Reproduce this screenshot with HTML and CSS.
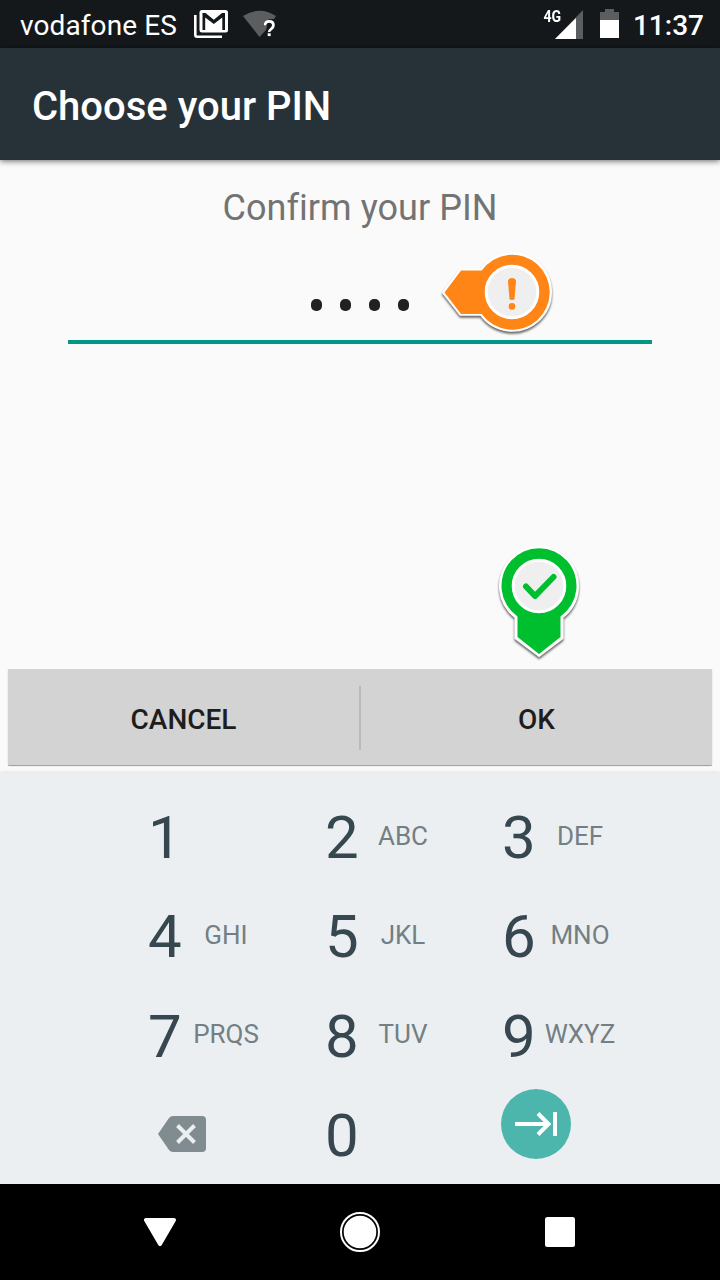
FILE: index.html
```
<!DOCTYPE html>
<html lang="en">
<head>
    <meta charset="UTF-8">
    <meta name="viewport" content="width=device-width, initial-scale=1.0">
    <title>Choose your PIN</title>
    <link rel="stylesheet" href="styles.css">
</head>
<body>
    <div class="status-bar">
        <span class="carrier">vodafone ES</span>
        <svg class="mail-icon" width="34" height="28" viewBox="0 0 34 28">
            <path d="M1.300 5v20q0 1.700 1.700 1.700h25" fill="none" stroke="#fff" stroke-width="2.600"/>
            <rect x="5.500" y="0" width="28.500" height="22.500" rx="2.500" fill="#fff"/>
            <path d="M8.500 20V3h3l8.300 6.800L28 3h3v17h-2.700V7.500L19.800 14 11.200 7.500V20z" fill="#14181b"/>
        </svg>
        <svg class="wifi-icon" width="34" height="28" viewBox="0 0 34 28">
            <path d="M0 6Q16.500-4.500 33 6L31 9Q22 8 20 16h4l-1 4-6.500 7z" fill="#5b5d5f"/>
            <path d="M22 15.500q0-4.200 4.200-4.200t4.200 4q0 2-2.200 3.700t-2 3" fill="none" stroke="#fff" stroke-width="2.800"/>
            <rect x="24.700" y="23.300" width="3" height="2.800" fill="#fff"/>
        </svg>
        <span class="network">4G</span>
        <svg class="signal-icon" width="29" height="29" viewBox="0 0 29 29">
            <path d="M28 0v29H0z" fill="#5b5d5f"/>
            <path d="M21 8v21H0z" fill="#fff"/>
        </svg>
        <svg class="battery-icon" width="19" height="29" viewBox="0 0 19 29">
            <path d="M0 3h5V0h9v3h5v9H0z" fill="#5b5d5f"/>
            <path d="M0 11h19v18H0z" fill="#fff"/>
        </svg>
        <span class="clock">11:37</span>
    </div>
    <div class="header">Choose your PIN</div>
    <div class="content">
        <div class="label">Confirm your PIN</div>
        <div class="pin">
            <span class="dot"></span>
            <span class="dot"></span>
            <span class="dot"></span>
            <span class="dot"></span>
        </div>
        <svg class="marker warning" width="120" height="90" viewBox="0 0 120 90">
            <path d="M6.500 44.500 23 22.500h20.500a37.500 37.500 0 1 1 0 43H23z" fill="#fff" stroke="#fff" stroke-width="4.500"/>
            <path d="M6.500 44.500 23 22.500h20.700a37.500 37.500 0 1 1 0 43.500H23z" fill="#ff8516"/>
            <circle cx="74" cy="44" r="25.800" fill="#efefef" stroke="#fff" stroke-width="3"/>
            <path d="M70 33.500q0-3.500 4-3.500t4 3.500L76.500 51q-.5 1-2.500 1t-2.500-1z" fill="#ff8516"/>
            <circle cx="74" cy="58.400" r="3.300" fill="#ff8516"/>
        </svg>
        <svg class="marker success" width="90" height="120" viewBox="0 0 90 120">
            <path d="M45 114 23 97.500V76.500a37.500 37.500 0 1 1 44 0v21z" fill="#fff" stroke="#fff" stroke-width="5"/>
            <path d="M45 114 23.500 97V76.500a37.500 37.500 0 1 1 43 0V97z" fill="#00bf2f"/>
            <circle cx="45" cy="46" r="25.800" fill="#efefef" stroke="#fff" stroke-width="3"/>
            <path d="M32 46.500 41 56l18.500-19" fill="none" stroke="#00bf2f" stroke-width="6" stroke-linecap="round" stroke-linejoin="round"/>
        </svg>
        <div class="actions">
            <button>CANCEL</button>
            <div class="divider"></div>
            <button>OK</button>
        </div>
    </div>
    <div class="keypad">
        <div class="key"><b>1</b><span></span></div>
        <div class="key"><b>2</b><span>ABC</span></div>
        <div class="key"><b>3</b><span>DEF</span></div>
        <div class="key"><b>4</b><span>GHI</span></div>
        <div class="key"><b>5</b><span>JKL</span></div>
        <div class="key"><b>6</b><span>MNO</span></div>
        <div class="key"><b>7</b><span>PRQS</span></div>
        <div class="key"><b>8</b><span>TUV</span></div>
        <div class="key"><b>9</b><span>WXYZ</span></div>
        <div class="key delete">
            <svg width="48" height="36" viewBox="0 0 48 36">
                <path d="M0 18 11 2q1.500-2 4-2h29q4 0 4 4v28q0 4-4 4H15q-2.500 0-4-2z" fill="#808c90"/>
                <path d="M19.500 9.500l17 17M36.500 9.500l-17 17" stroke="#eceff1" stroke-width="4"/>
            </svg>
        </div>
        <div class="key"><b>0</b><span></span></div>
        <div class="key next">
            <svg width="70" height="70" viewBox="0 0 70 70">
                <circle cx="35" cy="35" r="35" fill="#4db6ac"/>
                <path d="M14 35h33M37 24.500 47.500 35 37 45.500M54 23v24" fill="none" stroke="#fff" stroke-width="4"/>
            </svg>
        </div>
    </div>
    <div class="nav-bar">
        <svg width="32" height="28" viewBox="0 0 32 28">
            <path d="M2 2h28L16 26z" fill="#fff" stroke="#fff" stroke-width="4" stroke-linejoin="round"/>
        </svg>
        <svg width="40" height="40" viewBox="0 0 40 40">
            <circle cx="20" cy="20" r="19" fill="none" stroke="#fff" stroke-width="2"/>
            <circle cx="20" cy="20" r="16.300" fill="#fff"/>
        </svg>
        <svg width="30" height="30" viewBox="0 0 30 30">
            <rect width="30" height="30" rx="2.500" fill="#fff"/>
        </svg>
    </div>
</body>
</html>
```
FILE: styles.css
```
* {
    margin: 0;
    padding: 0;
    box-sizing: border-box;
}
body {
    display: flex;
    flex-direction: column;
    width: 720px;
    height: 1280px;
    background: #fafafa;
    font-family: Roboto, sans-serif;
    overflow: hidden;
}
svg {
    display: block;
    flex: none;
}
.status-bar {
    display: flex;
    align-items: center;
    height: 48px;
    padding: 0 16px 0 20px;
    background: #14181b;
    color: #fff;
    font-size: 28px;
}
.carrier {
    width: 174px;
    padding-top: 3px;
    letter-spacing: 0.1px;
}
.wifi-icon {
    margin-left: 15px;
}
.network {
    margin-left: auto;
    margin-right: -6px;
    padding-bottom: 16px;
    font-size: 16px;
    font-weight: 700;
    transform: scaleX(0.88);
    transform-origin: right;
}
.battery-icon {
    margin-left: 16px;
    margin-bottom: 1px;
}
.clock {
    margin-left: 14px;
    padding-top: 3px;
    font-weight: 500;
}
.header {
    height: 112px;
    padding-left: 32px;
    background: #263238;
    color: #fff;
    font-size: 40px;
    font-weight: 500;
    line-height: 118px;
    box-shadow: 0 1px 6px rgba(0, 0, 0, 0.6);
    z-index: 1;
}
.content {
    position: relative;
    display: flex;
    flex-direction: column;
    height: 613px;
    padding: 26px 8px 8px;
}
.label {
    color: #737373;
    font-size: 36px;
    line-height: 44px;
    letter-spacing: 0.05px;
    text-align: center;
}
.pin {
    display: flex;
    justify-content: center;
    gap: 18px;
    height: 114px;
    margin: 0 60px;
    padding-top: 69px;
    border-bottom: 4px solid #009688;
}
.dot {
    width: 11px;
    height: 12px;
    border-radius: 5px;
    background: #212121;
}
/* callouts float over the form */
.marker {
    position: absolute;
    filter: drop-shadow(0 2px 1px rgba(0, 0, 0, 0.6));
}
.warning {
    left: 438px;
    top: 88px;
}
.success {
    left: 494px;
    top: 380px;
}
.actions {
    display: flex;
    align-items: center;
    height: 96px;
    margin-top: auto;
    background: #d3d3d3;
    border-radius: 1px;
    box-shadow: 0 1px 1px #999;
}
.actions button {
    flex: 1;
    height: 96px;
    padding-top: 5px;
    background: none;
    border: none;
    color: #1d1d1d;
    font-family: inherit;
    font-size: 28px;
    font-weight: 500;
}
.divider {
    width: 2px;
    height: 64px;
    margin-top: 2px;
    background: #b9b9b9;
}
.keypad {
    display: grid;
    grid-template-columns: repeat(3, 177px);
    grid-template-rows: repeat(4, 99.3px);
    height: 411px;
    padding: 13px 0 0 148px;
    background: #ebeff2;
    box-shadow: 0 -1px 3px rgba(0, 0, 0, 0.1);
}
.key {
    display: flex;
    align-items: center;
}
.key b {
    width: 34px;
    padding-top: 5px;
    color: #37474f;
    font-size: 60px;
    font-weight: 400;
    line-height: 70px;
}
.key span {
    width: 88px;
    color: #737f84;
    font-size: 26px;
    text-align: center;
}
.delete {
    padding-left: 10px;
}
.next {
    padding-bottom: 19px;
    margin-left: -1px;
}
.nav-bar {
    display: grid;
    grid-template-columns: repeat(3, 200px);
    justify-content: center;
    justify-items: center;
    align-items: center;
    height: 96px;
    background: #000;
}
```
